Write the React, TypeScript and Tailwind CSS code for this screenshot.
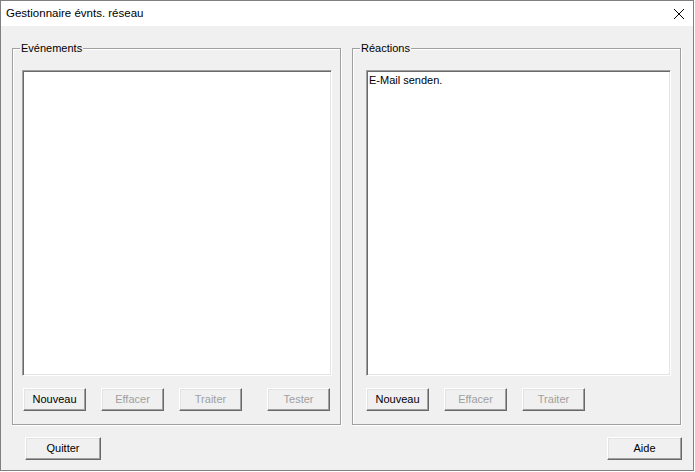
import React from 'react';

const font = { fontFamily: '"Liberation Sans", Arial, sans-serif' };

function Btn({ label, disabled, className = '' }: { label: string; disabled?: boolean; className?: string }) {
  return (
    <button
      type="button"
      className={`h-[23px] flex items-center justify-center bg-[#f0f0f0] border border-t-white border-l-white border-b-[#696969] border-r-[#696969] shadow-[inset_-1px_-1px_0_#a0a0a0,inset_1px_1px_0_#e3e3e3] text-[11px] leading-none ${
        disabled ? 'text-[#a0a0a0]' : 'text-black'
      } ${className}`}
    >
      {label}
    </button>
  );
}

function Group({
  title,
  children,
  className = '',
}: {
  title: string;
  children: React.ReactNode;
  className?: string;
}) {
  return (
    <div
      className={`relative w-[329px] h-[377px] border border-[#a0a0a0] shadow-[1px_1px_0_#fff,inset_1px_1px_0_#fff] ${className}`}
    >
      <span className="absolute left-[7px] top-[-8px] bg-[#f0f0f0] px-[1px] text-[11px] leading-[14px] text-black">
        {title}
      </span>
      {children}
    </div>
  );
}

function ListBox({ className = '', children }: { className?: string; children?: React.ReactNode }) {
  return (
    <div
      className={`h-[306px] bg-white border border-t-[#a0a0a0] border-l-[#a0a0a0] border-b-white border-r-white shadow-[inset_1px_1px_0_#696969,inset_-1px_-1px_0_#e3e3e3] px-[2px] pt-[2px] text-[11px] leading-[14px] text-black ${className}`}
    >
      {children}
    </div>
  );
}

export default function App() {
  return (
    <div className="w-[695px] h-[472px] bg-white" style={font}>
      <div className="w-[694px] h-[471px] flex flex-col border border-[#7f7f7f] bg-[#f0f0f0]">
        {/* Title bar */}
        <div className="h-[25px] shrink-0 bg-white flex items-center justify-between pl-[5px] pr-[8px]">
          <span className="text-[11.5px] text-black">Gestionnaire évnts. réseau</span>
          <svg width="12" height="12" viewBox="0 0 12 12" className="mr-[0px]">
            <path d="M1 1L11 11M11 1L1 11" stroke="#000" strokeWidth="1" />
          </svg>
        </div>

        {/* Groups */}
        <div className="flex pl-[11px] pt-[22px] gap-[11px]">
          <Group title="Evénements">
            <div className="flex flex-col pl-[9px] pt-[21px]">
              <ListBox className="w-[310px]" />
              <div className="flex mt-[12px] pl-[1px]">
                <Btn label="Nouveau" className="w-[63px]" />
                <Btn label="Effacer" disabled className="w-[63px] ml-[15px]" />
                <Btn label="Traiter" disabled className="w-[63px] ml-[15px]" />
                <Btn label="Tester" disabled className="w-[63px] ml-[25px]" />
              </div>
            </div>
          </Group>
          <Group title="Réactions">
            <div className="flex flex-col pl-[13px] pt-[21px]">
              <ListBox className="w-[305px]">E-Mail senden.</ListBox>
              <div className="flex mt-[12px]">
                <Btn label="Nouveau" className="w-[63px]" />
                <Btn label="Effacer" disabled className="w-[63px] ml-[15px]" />
                <Btn label="Traiter" disabled className="w-[63px] ml-[15px]" />
              </div>
            </div>
          </Group>
        </div>

        {/* Bottom buttons */}
        <div className="flex justify-between pl-[24px] pr-[11px] mt-[12px]">
          <Btn label="Quitter" className="w-[76px]" />
          <Btn label="Aide" className="w-[75px]" />
        </div>
      </div>
    </div>
  );
}
